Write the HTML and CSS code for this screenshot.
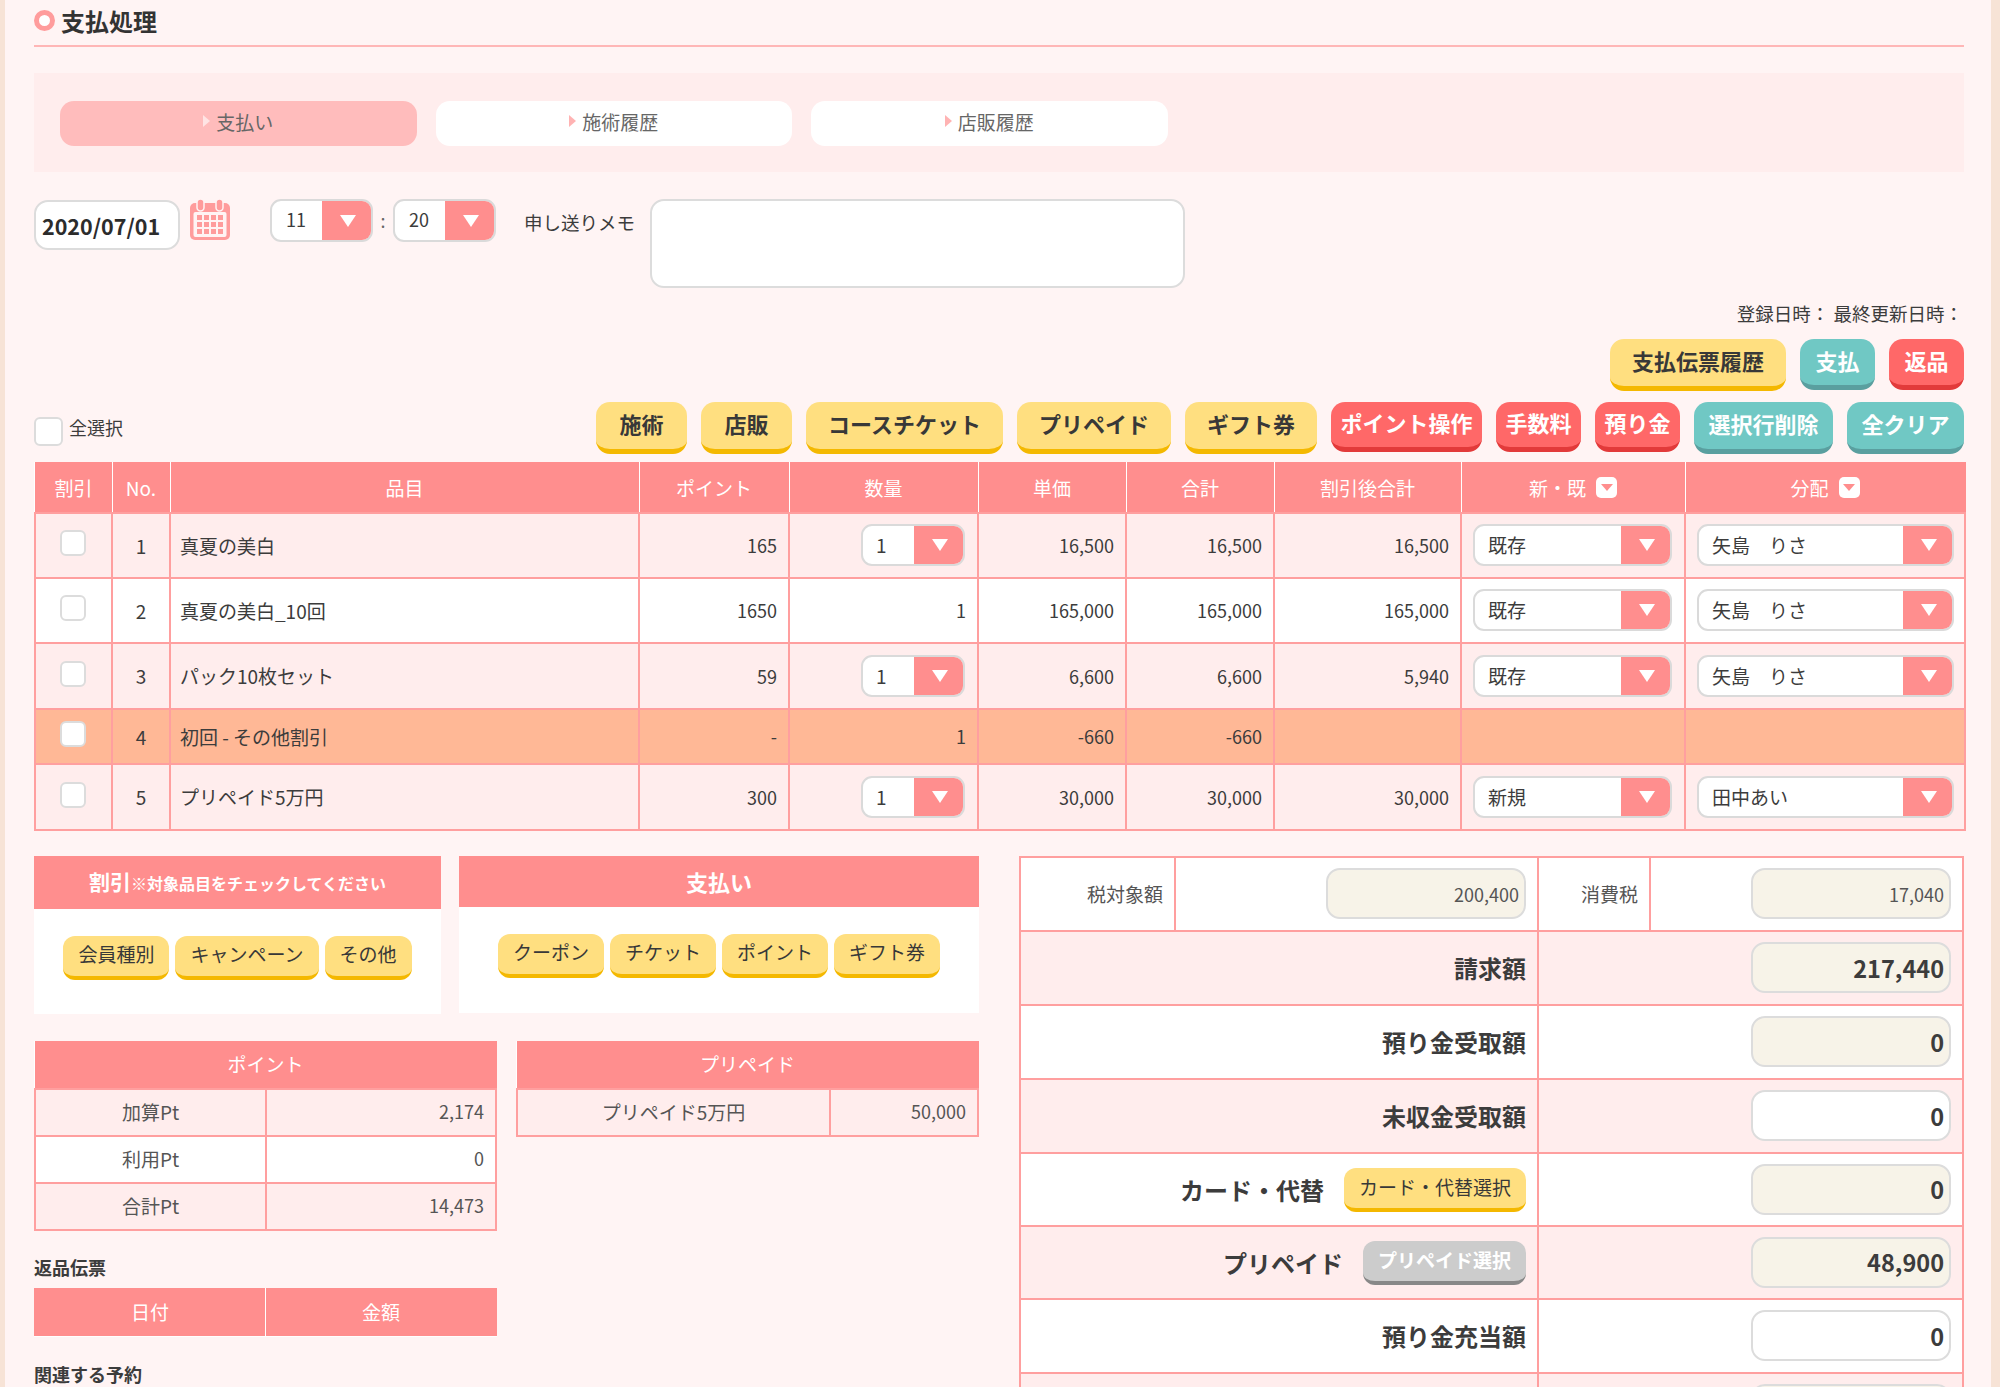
FILE: index.html
```html
<!DOCTYPE html>
<html lang="ja">
<head>
    <meta charset="UTF-8">
    <title>支払処理</title>
    <link rel="stylesheet" href="styles.css">
</head>
<body>
<div class="page">
    <h1 class="page-title"><span class="ring"></span>支払処理</h1>

    <div class="tab-panel">
        <a class="tab active">支払い</a>
        <a class="tab">施術履歴</a>
        <a class="tab">店販履歴</a>
    </div>

    <div class="form-row">
        <input class="date-input" type="text" value="2020/07/01">
        <svg class="calendar" viewBox="0 0 40 41" width="40" height="41">
            <rect x="0" y="4" width="40" height="37" rx="5" fill="#ff9c9c"/>
            <rect x="7" y="0" width="7" height="12" rx="3.5" fill="#ff9c9c" stroke="#fff4f4" stroke-width="1.5"/>
            <rect x="26" y="0" width="7" height="12" rx="3.5" fill="#ff9c9c" stroke="#fff4f4" stroke-width="1.5"/>
            <rect x="3.5" y="13" width="33" height="25" rx="2" fill="#fff4f4"/>
            <g fill="#ff9c9c">
                <rect x="7" y="16" width="5" height="5"/><rect x="14" y="16" width="5" height="5"/><rect x="21" y="16" width="5" height="5"/><rect x="28" y="16" width="5" height="5"/>
                <rect x="7" y="23" width="5" height="5"/><rect x="14" y="23" width="5" height="5"/><rect x="21" y="23" width="5" height="5"/><rect x="28" y="23" width="5" height="5"/>
                <rect x="7" y="30" width="5" height="5"/><rect x="14" y="30" width="5" height="5"/><rect x="21" y="30" width="5" height="5"/><rect x="28" y="30" width="5" height="5"/>
            </g>
        </svg>
        <div class="sel sel-time"><span class="sel-val">11</span><span class="sel-arrow"></span></div>
        <span class="colon">:</span>
        <div class="sel sel-time"><span class="sel-val">20</span><span class="sel-arrow"></span></div>
        <label class="memo-label">申し送りメモ</label>
        <textarea class="memo"></textarea>
    </div>

    <div class="meta">登録日時： 最終更新日時：</div>

    <div class="btn-row btn-row-top">
        <button class="btn yellow">支払伝票履歴</button>
        <button class="btn teal tight">支払</button>
        <button class="btn red tight">返品</button>
    </div>

    <div class="btn-row">
        <label class="select-all"><input class="chk" type="checkbox"><span class="select-text">全選択</span></label>
        <button class="btn yellow wide push">施術</button>
        <button class="btn yellow wide">店販</button>
        <button class="btn yellow">コースチケット</button>
        <button class="btn yellow">プリペイド</button>
        <button class="btn yellow">ギフト券</button>
        <button class="btn red">ポイント操作</button>
        <button class="btn red">手数料</button>
        <button class="btn red">預り金</button>
        <button class="btn teal">選択行削除</button>
        <button class="btn teal">全クリア</button>
    </div>

    <table class="grid items">
        <colgroup>
            <col class="c-disc"><col class="c-no"><col class="c-name"><col class="c-pt"><col class="c-qty">
            <col class="c-price"><col class="c-price"><col class="c-after"><col class="c-kind"><col class="c-staff">
        </colgroup>
        <thead>
            <tr>
                <th>割引</th><th>No.</th><th>品目</th><th>ポイント</th><th>数量</th><th>単価</th><th>合計</th><th>割引後合計</th>
                <th><span class="th-drop">新・既<i class="drop-icon"></i></span></th>
                <th><span class="th-drop">分配<i class="drop-icon"></i></span></th>
            </tr>
        </thead>
        <tbody>
            <tr class="row-a pink">
                <td class="ctr"><input class="chk chk-row" type="checkbox"></td>
                <td class="ctr">1</td>
                <td class="name">真夏の美白</td>
                <td class="num">165</td>
                <td class="num"><div class="sel sel-qty"><span class="sel-val">1</span><span class="sel-arrow"></span></div></td>
                <td class="num">16,500</td>
                <td class="num">16,500</td>
                <td class="num">16,500</td>
                <td><div class="sel sel-kind"><span class="sel-val">既存</span><span class="sel-arrow"></span></div></td>
                <td><div class="sel sel-staff"><span class="sel-val">矢島　りさ</span><span class="sel-arrow"></span></div></td>
            </tr>
            <tr class="row-a">
                <td class="ctr"><input class="chk chk-row" type="checkbox"></td>
                <td class="ctr">2</td>
                <td class="name">真夏の美白_10回</td>
                <td class="num">1650</td>
                <td class="num">1</td>
                <td class="num">165,000</td>
                <td class="num">165,000</td>
                <td class="num">165,000</td>
                <td><div class="sel sel-kind"><span class="sel-val">既存</span><span class="sel-arrow"></span></div></td>
                <td><div class="sel sel-staff"><span class="sel-val">矢島　りさ</span><span class="sel-arrow"></span></div></td>
            </tr>
            <tr class="row-b pink">
                <td class="ctr"><input class="chk chk-row" type="checkbox"></td>
                <td class="ctr">3</td>
                <td class="name">パック10枚セット</td>
                <td class="num">59</td>
                <td class="num"><div class="sel sel-qty"><span class="sel-val">1</span><span class="sel-arrow"></span></div></td>
                <td class="num">6,600</td>
                <td class="num">6,600</td>
                <td class="num">5,940</td>
                <td><div class="sel sel-kind"><span class="sel-val">既存</span><span class="sel-arrow"></span></div></td>
                <td><div class="sel sel-staff"><span class="sel-val">矢島　りさ</span><span class="sel-arrow"></span></div></td>
            </tr>
            <tr class="row-c orange">
                <td class="ctr"><input class="chk chk-row" type="checkbox"></td>
                <td class="ctr">4</td>
                <td class="name">初回 - その他割引</td>
                <td class="num">-</td>
                <td class="num">1</td>
                <td class="num">-660</td>
                <td class="num">-660</td>
                <td></td>
                <td></td>
                <td></td>
            </tr>
            <tr class="row-d pink">
                <td class="ctr"><input class="chk chk-row" type="checkbox"></td>
                <td class="ctr">5</td>
                <td class="name">プリペイド5万円</td>
                <td class="num">300</td>
                <td class="num"><div class="sel sel-qty"><span class="sel-val">1</span><span class="sel-arrow"></span></div></td>
                <td class="num">30,000</td>
                <td class="num">30,000</td>
                <td class="num">30,000</td>
                <td><div class="sel sel-kind"><span class="sel-val">新規</span><span class="sel-arrow"></span></div></td>
                <td><div class="sel sel-staff"><span class="sel-val">田中あい</span><span class="sel-arrow"></span></div></td>
            </tr>
        </tbody>
    </table>

    <div class="lower">
        <div class="lower-left">
            <div class="panels">
                <section class="panel panel-disc">
                    <div class="panel-head head-disc">割引<small>※対象品目をチェックしてください</small></div>
                    <div class="panel-body">
                        <button class="btn yellow small">会員種別</button>
                        <button class="btn yellow small">キャンペーン</button>
                        <button class="btn yellow small">その他</button>
                    </div>
                </section>
                <section class="panel panel-pay">
                    <div class="panel-head">支払い</div>
                    <div class="panel-body">
                        <button class="btn yellow small">クーポン</button>
                        <button class="btn yellow small">チケット</button>
                        <button class="btn yellow small">ポイント</button>
                        <button class="btn yellow small">ギフト券</button>
                    </div>
                </section>
            </div>

            <div class="side-tables">
                <table class="grid mini">
                    <colgroup><col class="c-half"><col></colgroup>
                    <thead><tr><th colspan="2">ポイント</th></tr></thead>
                    <tbody>
                        <tr class="pink"><td class="ctr">加算Pt</td><td class="num">2,174</td></tr>
                        <tr><td class="ctr">利用Pt</td><td class="num">0</td></tr>
                        <tr class="pink"><td class="ctr">合計Pt</td><td class="num">14,473</td></tr>
                    </tbody>
                </table>
                <table class="grid mini">
                    <colgroup><col class="c-prepaid"><col></colgroup>
                    <thead><tr><th colspan="2">プリペイド</th></tr></thead>
                    <tbody>
                        <tr class="pink"><td class="ctr">プリペイド5万円</td><td class="num">50,000</td></tr>
                    </tbody>
                </table>
            </div>

            <h3 class="sub-title">返品伝票</h3>
            <table class="grid mini return-table">
                <colgroup><col class="c-half"><col></colgroup>
                <thead><tr><th>日付</th><th>金額</th></tr></thead>
            </table>

            <h3 class="sub-title related">関連する予約</h3>
        </div>

        <table class="grid totals">
            <colgroup><col class="t-a"><col class="t-b"><col class="t-c"><col></colgroup>
            <tbody>
                <tr>
                    <td class="lbl-sm">税対象額</td>
                    <td class="val"><input class="amount ro sm" type="text" value="200,400"></td>
                    <td class="lbl-sm">消費税</td>
                    <td class="val"><input class="amount ro sm" type="text" value="17,040"></td>
                </tr>
                <tr class="pink">
                    <td class="lbl" colspan="2">請求額</td>
                    <td class="val" colspan="2"><input class="amount ro" type="text" value="217,440"></td>
                </tr>
                <tr>
                    <td class="lbl" colspan="2">預り金受取額</td>
                    <td class="val" colspan="2"><input class="amount ro" type="text" value="0"></td>
                </tr>
                <tr class="pink">
                    <td class="lbl" colspan="2">未収金受取額</td>
                    <td class="val" colspan="2"><input class="amount" type="text" value="0"></td>
                </tr>
                <tr class="row-short">
                    <td class="lbl" colspan="2"><div class="lbl-btn">カード・代替<button class="btn yellow small">カード・代替選択</button></div></td>
                    <td class="val" colspan="2"><input class="amount ro" type="text" value="0"></td>
                </tr>
                <tr class="pink row-short">
                    <td class="lbl" colspan="2"><div class="lbl-btn">プリペイド<button class="btn gray small">プリペイド選択</button></div></td>
                    <td class="val" colspan="2"><input class="amount ro" type="text" value="48,900"></td>
                </tr>
                <tr>
                    <td class="lbl" colspan="2">預り金充当額</td>
                    <td class="val" colspan="2"><input class="amount" type="text" value="0"></td>
                </tr>
                <tr class="pink">
                    <td class="lbl" colspan="2"><button class="btn red mini-red"></button></td>
                    <td class="val" colspan="2"><input class="amount ro" type="text" value=""></td>
                </tr>
            </tbody>
        </table>
    </div>
</div>
</body>
</html>
```

FILE: styles.css
```css
:root {
    --salmon: #ff8e8e;
    --line: #ff9f9f;
    --pink: #ffeded;
    --dark-text: #3c3c3c;
}

* {
    box-sizing: border-box;
    margin: 0;
    padding: 0;
}

html, body {
    height: 1387px;
    overflow: hidden;
}

body {
    font-family: "Noto Sans CJK JP", "Noto Sans", sans-serif;
    font-size: 18px;
    color: var(--dark-text);
    background: #f7e3d6;
}

.page {
    height: 1387px;
    margin: 0 9px 0 5px;
    padding: 0 27px 0 29px;
    overflow: hidden;
    background-color: #fff4f4;
}

/* title */
.page-title {
    display: flex;
    align-items: center;
    gap: 6px;
    height: 47px;
    padding-bottom: 4px;
    font-size: 24px;
    line-height: 36px;
    color: #333;
    border-bottom: 2px solid #ffb6b6;
}

.ring {
    width: 21px;
    height: 21px;
    border: 5px solid #ff9c9c;
    border-radius: 50%;
    background: #fff;
}

/* tabs */
.tab-panel {
    display: flex;
    gap: 19px;
    height: 99px;
    margin-top: 26px;
    padding: 28px 26px 26px;
    background: #ffeded;
}

.tab {
    display: flex;
    justify-content: center;
    align-items: center;
    gap: 6px;
    width: 356.5px;
    height: 45px;
    padding-bottom: 5px;
    font-size: 19px;
    color: #666;
    background: #fff;
    border-radius: 14px;
}

.tab::before {
    content: "";
    border-left: 7px solid #ffb3b3;
    border-top: 6px solid transparent;
    border-bottom: 6px solid transparent;
}

.tab.active {
    background: #ffbcbc;
}

.tab.active::before {
    border-left-color: #ffe4e4;
}

/* date, time, memo */
.form-row {
    display: flex;
    align-items: flex-start;
    margin-top: 27px;
}

input, textarea {
    font-family: inherit;
    color: inherit;
    outline: none;
}

.date-input {
    width: 146px;
    height: 50px;
    margin-top: 1px;
    padding: 0 6px;
    font-size: 21.5px;
    font-weight: 700;
    color: #2c2c2c;
    background: #fff;
    border: 2px solid #dcdcdc;
    border-radius: 14px;
}

.calendar {
    margin: 0 40px 0 10px;
}

.sel {
    display: flex;
    overflow: hidden;
    height: 42px;
    background: #fff;
    border: 2px solid #dadada;
    border-radius: 11px;
}

.sel-val {
    flex: 1;
    padding-left: 13px;
    line-height: 37px;
    font-size: 19px;
    text-align: left;
}

.sel-arrow {
    display: flex;
    justify-content: center;
    align-items: center;
    width: 51px;
    margin: -2px -2px -2px 0;
    background: var(--salmon);
}

.sel-arrow::after {
    content: "";
    border-top: 12px solid #fff;
    border-left: 8px solid transparent;
    border-right: 8px solid transparent;
}

.sel-time {
    width: 103px;
    height: 43px;
}

.sel-time .sel-val {
    padding-left: 14px;
    font-size: 18px;
}

.colon {
    width: 20px;
    margin-top: 8px;
    text-align: center;
    color: #666;
}

.memo-label {
    margin: 10px 15px 0 28px;
    font-size: 18.5px;
    line-height: 27px;
}

.memo {
    width: 535px;
    height: 89px;
    resize: none;
    background: #fff;
    border: 2px solid #dcdcdc;
    border-radius: 14px;
}

.meta {
    margin-top: 12px;
    padding-right: 1px;
    font-size: 18.5px;
    line-height: 27px;
    text-align: right;
}

/* buttons */
.btn-row {
    display: flex;
    align-items: flex-start;
    gap: 14px;
    margin-top: 11px;
}

.btn-row-top {
    justify-content: flex-end;
    margin-top: 12px;
}

.push {
    margin-left: auto;
}

.select-all {
    display: flex;
    align-items: center;
    gap: 6px;
    margin-top: 12px;
    font-size: 18px;
}

.select-text {
    margin-bottom: 8px;
}

.chk {
    appearance: none;
    width: 29px;
    height: 29px;
    background: #fff;
    border: 2px solid #dcdcdc;
    border-radius: 6px;
}

.chk-row {
    display: block;
    width: 26px;
    height: 26px;
    margin: 0 auto 4px;
}

.btn {
    height: 52px;
    padding: 0 22px 5px;
    font-family: inherit;
    font-size: 22px;
    font-weight: 700;
    line-height: 1;
    white-space: nowrap;
    border: none;
    border-bottom: 5px solid;
    border-radius: 14px;
    cursor: pointer;
}

.btn.wide {
    padding: 0 23.5px 5px;
}

.yellow {
    color: #383838;
    background: #ffdf80;
    border-color: #f4b800;
}

.red {
    height: 50px;
    padding: 0 9.5px 5px;
    color: #fff;
    background: #ff6868;
    border-color: #e23a3a;
}

.teal {
    padding: 0 14.5px 5px;
    color: #fff;
    background: #70c8c4;
    border-color: #5a9f9f;
}

.gray {
    color: #fff;
    background: #ccc;
    border-color: #888;
    font-weight: 700;
}

.btn.tight {
    height: 51px;
    padding: 0 15.5px 5px;
}

.btn.small {
    height: 44px;
    padding: 0 15px 4px;
    font-size: 19px;
    font-weight: 400;
    border-bottom-width: 4px;
    border-radius: 12px;
}

.btn.gray.small {
    font-weight: 700;
}

/* tables */
.grid {
    width: 100%;
    border-collapse: collapse;
    table-layout: fixed;
    background: #fff;
}

.grid th {
    font-size: 19px;
    font-weight: 400;
    color: #fff;
    background: var(--salmon);
    border: 1px solid #fff;
    border-top-color: var(--salmon);
}

.grid th:first-child {
    border-left-color: var(--salmon);
}

.grid th:last-child {
    border-right-color: var(--salmon);
}

.grid td {
    padding: 0 11px;
    font-size: 19px;
    border: 2px solid var(--line);
}

.grid td.num {
    font-size: 18px;
}

.pink td {
    background: var(--pink);
}

.orange td {
    background: #ffb896;
}

.ctr {
    text-align: center;
}

.num {
    text-align: right;
}

.items {
    margin-top: 8px;
}

.items thead tr {
    height: 50px;
}

.row-a {
    height: 65px;
}

.row-b {
    height: 66px;
}

.row-c {
    height: 55px;
}

.row-d {
    height: 66px;
}

.c-disc { width: 77px; }
.c-no { width: 58px; }
.c-name { width: 469px; }
.c-pt { width: 150px; }
.c-qty { width: 189px; }
.c-price { width: 148px; }
.c-after { width: 187px; }
.c-kind { width: 224px; }
.c-staff { width: 280px; }

.items td:first-child {
    padding-right: 13px;
}

.grid td.name {
    padding-left: 9px;
}

.items td:nth-last-child(-n+2) {
    padding: 0 11px;
}

.sel-qty {
    width: 104px;
    margin: 0 1px 0 auto;
}

.sel-kind {
    width: 199px;
}

.sel-staff {
    width: 257px;
}

.th-drop {
    display: inline-flex;
    align-items: center;
    gap: 10px;
}

.drop-icon {
    display: flex;
    justify-content: center;
    align-items: center;
    width: 21px;
    height: 21px;
    background: #fff;
    border-radius: 5px;
}

.drop-icon::after {
    content: "";
    border-top: 7px solid #ff8e8e;
    border-left: 6px solid transparent;
    border-right: 6px solid transparent;
}

/* lower area */
.lower {
    display: flex;
    justify-content: space-between;
    align-items: flex-start;
    margin-top: 25px;
}

.lower-left {
    width: 945px;
}

.panels {
    display: flex;
    justify-content: space-between;
}

.panel {
    background: #fff;
}

.panel-disc {
    width: 407px;
    height: 158px;
}

.panel-pay {
    width: 520px;
    height: 157px;
}

.panel-head {
    height: 51px;
    font-size: 22px;
    font-weight: 700;
    line-height: 50px;
    text-align: center;
    color: #fff;
    background: var(--salmon);
}

.head-disc {
    height: 53px;
    font-size: 21px;
}

.head-disc small {
    font-size: 16px;
}

.panel-body {
    display: flex;
    justify-content: center;
    gap: 6px;
    padding-top: 27px;
}

.side-tables {
    display: flex;
    align-items: flex-start;
    gap: 19px;
    margin-top: 27px;
}

.mini {
    width: 463px;
}

.mini thead tr {
    height: 48px;
}

.mini th {
    padding-bottom: 2px;
}

.mini tbody tr {
    height: 47px;
}

.grid.mini td {
    padding-bottom: 3px;
    color: #555;
}

.c-half { width: 231px; }
.c-prepaid { width: 313px; }

.sub-title {
    margin: 18px 0 3px;
    font-size: 18px;
    font-weight: 700;
    line-height: 36px;
}

.sub-title.related {
    margin: 19px 0 0;
}

.totals {
    width: 945px;
}

.totals tr {
    height: 74px;
}

.totals tr.row-short {
    height: 73px;
}

.t-a { width: 155px; }
.t-b { width: 363px; }
.t-c { width: 112px; }

.lbl-sm {
    text-align: right;
    color: #555;
}

.grid td.lbl {
    font-size: 24px;
    font-weight: 700;
    text-align: right;
}

.lbl-btn {
    display: flex;
    justify-content: flex-end;
    align-items: center;
    gap: 20px;
}

.lbl .btn.small {
    margin-top: 2px;
}

.val {
    text-align: right;
}

.amount {
    width: 200px;
    height: 51px;
    padding: 0 5px;
    font-size: 23.5px;
    font-weight: 700;
    text-align: right;
    vertical-align: middle;
    background: #fff;
    border: 2px solid #dcdcdc;
    border-radius: 14px;
}

.amount.ro {
    background: #f7f3e8;
}

.amount.sm {
    font-size: 18px;
    font-weight: 400;
    color: #555;
}

.mini-red {
    width: 34px;
    height: 40px;
    padding: 0;
    margin-right: 6px;
}
```
